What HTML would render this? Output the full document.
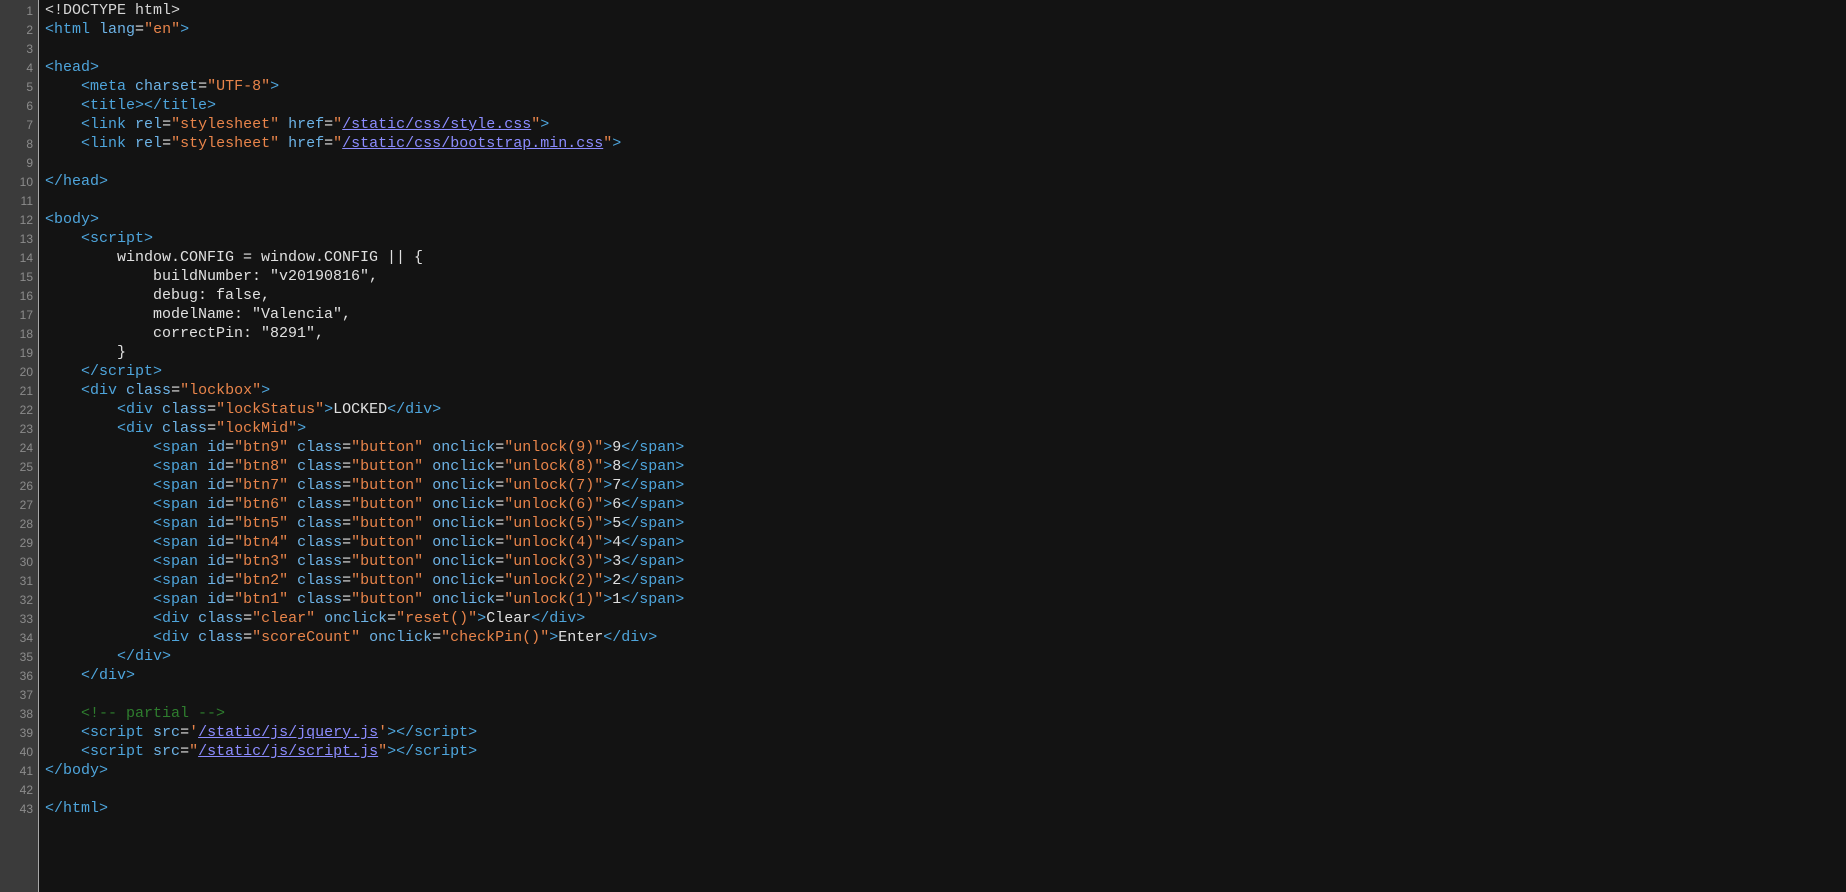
<!DOCTYPE html>
<html><head><meta charset="utf-8"><style>
html,body{margin:0;padding:0;background:#131313;width:1846px;height:892px;overflow:hidden}
.g{position:absolute;left:0;top:0;width:38px;height:892px;background:#3b3b3b;border-right:1px solid #a8a8a8}
.n{position:absolute;left:0;top:2px;width:33px;text-align:right;font:12px/19px "Liberation Sans",sans-serif;color:#8c8c8c;margin:0}
pre{position:absolute;left:45px;top:1px;margin:0;font:15px/19px "Liberation Mono",monospace;color:#e0e0e0;white-space:pre}
.d{color:#d6d6d6}
.t{color:#4ea5dc}.a{color:#6db3e6}.s{color:#e8844a}.c{color:#2e7d2e}.u{color:#8c8cff;text-decoration:underline}
</style></head><body>
<div class="g"></div>
<pre class="n">1
2
3
4
5
6
7
8
9
10
11
12
13
14
15
16
17
18
19
20
21
22
23
24
25
26
27
28
29
30
31
32
33
34
35
36
37
38
39
40
41
42
43</pre>
<pre><span class="d">&lt;!DOCTYPE html&gt;</span>
<span class="t">&lt;html</span> <span class="a">lang</span>=<span class="s">"en"</span><span class="t">&gt;</span>

<span class="t">&lt;head&gt;</span>
    <span class="t">&lt;meta</span> <span class="a">charset</span>=<span class="s">"UTF-8"</span><span class="t">&gt;</span>
    <span class="t">&lt;title&gt;&lt;/title&gt;</span>
    <span class="t">&lt;link</span> <span class="a">rel</span>=<span class="s">"stylesheet"</span> <span class="a">href</span>=<span class="s">"</span><span class="u">/static/css/style.css</span><span class="s">"</span><span class="t">&gt;</span>
    <span class="t">&lt;link</span> <span class="a">rel</span>=<span class="s">"stylesheet"</span> <span class="a">href</span>=<span class="s">"</span><span class="u">/static/css/bootstrap.min.css</span><span class="s">"</span><span class="t">&gt;</span>

<span class="t">&lt;/head&gt;</span>

<span class="t">&lt;body&gt;</span>
    <span class="t">&lt;script&gt;</span>
        window.CONFIG = window.CONFIG || {
            buildNumber: "v20190816",
            debug: false,
            modelName: "Valencia",
            correctPin: "8291",
        }
    <span class="t">&lt;/script&gt;</span>
    <span class="t">&lt;div</span> <span class="a">class</span>=<span class="s">"lockbox"</span><span class="t">&gt;</span>
        <span class="t">&lt;div</span> <span class="a">class</span>=<span class="s">"lockStatus"</span><span class="t">&gt;</span>LOCKED<span class="t">&lt;/div&gt;</span>
        <span class="t">&lt;div</span> <span class="a">class</span>=<span class="s">"lockMid"</span><span class="t">&gt;</span>
            <span class="t">&lt;span</span> <span class="a">id</span>=<span class="s">"btn9"</span> <span class="a">class</span>=<span class="s">"button"</span> <span class="a">onclick</span>=<span class="s">"unlock(9)"</span><span class="t">&gt;</span>9<span class="t">&lt;/span&gt;</span>
            <span class="t">&lt;span</span> <span class="a">id</span>=<span class="s">"btn8"</span> <span class="a">class</span>=<span class="s">"button"</span> <span class="a">onclick</span>=<span class="s">"unlock(8)"</span><span class="t">&gt;</span>8<span class="t">&lt;/span&gt;</span>
            <span class="t">&lt;span</span> <span class="a">id</span>=<span class="s">"btn7"</span> <span class="a">class</span>=<span class="s">"button"</span> <span class="a">onclick</span>=<span class="s">"unlock(7)"</span><span class="t">&gt;</span>7<span class="t">&lt;/span&gt;</span>
            <span class="t">&lt;span</span> <span class="a">id</span>=<span class="s">"btn6"</span> <span class="a">class</span>=<span class="s">"button"</span> <span class="a">onclick</span>=<span class="s">"unlock(6)"</span><span class="t">&gt;</span>6<span class="t">&lt;/span&gt;</span>
            <span class="t">&lt;span</span> <span class="a">id</span>=<span class="s">"btn5"</span> <span class="a">class</span>=<span class="s">"button"</span> <span class="a">onclick</span>=<span class="s">"unlock(5)"</span><span class="t">&gt;</span>5<span class="t">&lt;/span&gt;</span>
            <span class="t">&lt;span</span> <span class="a">id</span>=<span class="s">"btn4"</span> <span class="a">class</span>=<span class="s">"button"</span> <span class="a">onclick</span>=<span class="s">"unlock(4)"</span><span class="t">&gt;</span>4<span class="t">&lt;/span&gt;</span>
            <span class="t">&lt;span</span> <span class="a">id</span>=<span class="s">"btn3"</span> <span class="a">class</span>=<span class="s">"button"</span> <span class="a">onclick</span>=<span class="s">"unlock(3)"</span><span class="t">&gt;</span>3<span class="t">&lt;/span&gt;</span>
            <span class="t">&lt;span</span> <span class="a">id</span>=<span class="s">"btn2"</span> <span class="a">class</span>=<span class="s">"button"</span> <span class="a">onclick</span>=<span class="s">"unlock(2)"</span><span class="t">&gt;</span>2<span class="t">&lt;/span&gt;</span>
            <span class="t">&lt;span</span> <span class="a">id</span>=<span class="s">"btn1"</span> <span class="a">class</span>=<span class="s">"button"</span> <span class="a">onclick</span>=<span class="s">"unlock(1)"</span><span class="t">&gt;</span>1<span class="t">&lt;/span&gt;</span>
            <span class="t">&lt;div</span> <span class="a">class</span>=<span class="s">"clear"</span> <span class="a">onclick</span>=<span class="s">"reset()"</span><span class="t">&gt;</span>Clear<span class="t">&lt;/div&gt;</span>
            <span class="t">&lt;div</span> <span class="a">class</span>=<span class="s">"scoreCount"</span> <span class="a">onclick</span>=<span class="s">"checkPin()"</span><span class="t">&gt;</span>Enter<span class="t">&lt;/div&gt;</span>
        <span class="t">&lt;/div&gt;</span>
    <span class="t">&lt;/div&gt;</span>

    <span class="c">&lt;!-- partial --&gt;</span>
    <span class="t">&lt;script</span> <span class="a">src</span>=<span class="s">'</span><span class="u">/static/js/jquery.js</span><span class="s">'</span><span class="t">&gt;&lt;/script&gt;</span>
    <span class="t">&lt;script</span> <span class="a">src</span>=<span class="s">"</span><span class="u">/static/js/script.js</span><span class="s">"</span><span class="t">&gt;&lt;/script&gt;</span>
<span class="t">&lt;/body&gt;</span>

<span class="t">&lt;/html&gt;</span></pre>
</body></html>
